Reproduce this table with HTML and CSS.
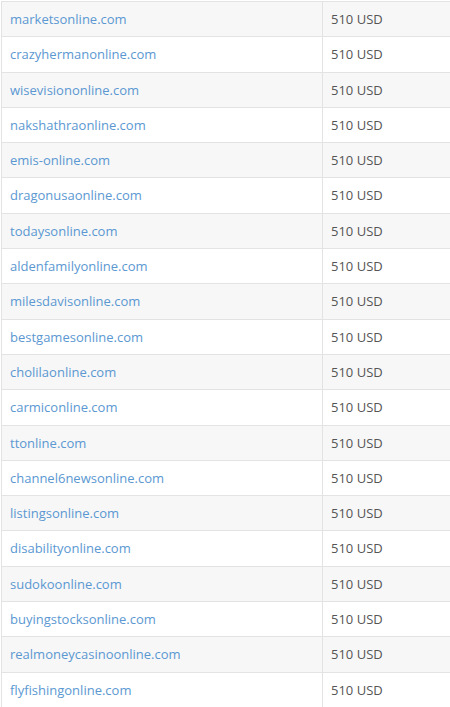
FILE: index.html
```html
<!DOCTYPE html>
<html lang="en">
<head>
    <meta charset="UTF-8">
    <title>Domains</title>
    <link rel="stylesheet" href="styles.css">
</head>
<body>
<div class="wrap">
    <table class="domains">
        <tbody>
            <tr><td><a href="#">marketsonline.com</a></td><td>510 USD</td></tr>
            <tr><td><a href="#">crazyhermanonline.com</a></td><td>510 USD</td></tr>
            <tr><td><a href="#">wisevisiononline.com</a></td><td>510 USD</td></tr>
            <tr><td><a href="#">nakshathraonline.com</a></td><td>510 USD</td></tr>
            <tr><td><a href="#">emis-online.com</a></td><td>510 USD</td></tr>
            <tr><td><a href="#">dragonusaonline.com</a></td><td>510 USD</td></tr>
            <tr><td><a href="#">todaysonline.com</a></td><td>510 USD</td></tr>
            <tr><td><a href="#">aldenfamilyonline.com</a></td><td>510 USD</td></tr>
            <tr><td><a href="#">milesdavisonline.com</a></td><td>510 USD</td></tr>
            <tr><td><a href="#">bestgamesonline.com</a></td><td>510 USD</td></tr>
            <tr><td><a href="#">cholilaonline.com</a></td><td>510 USD</td></tr>
            <tr><td><a href="#">carmiconline.com</a></td><td>510 USD</td></tr>
            <tr><td><a href="#">ttonline.com</a></td><td>510 USD</td></tr>
            <tr><td><a href="#">channel6newsonline.com</a></td><td>510 USD</td></tr>
            <tr><td><a href="#">listingsonline.com</a></td><td>510 USD</td></tr>
            <tr><td><a href="#">disabilityonline.com</a></td><td>510 USD</td></tr>
            <tr><td><a href="#">sudokoonline.com</a></td><td>510 USD</td></tr>
            <tr><td><a href="#">buyingstocksonline.com</a></td><td>510 USD</td></tr>
            <tr><td><a href="#">realmoneycasinoonline.com</a></td><td>510 USD</td></tr>
            <tr><td><a href="#">flyfishingonline.com</a></td><td>510 USD</td></tr>
        </tbody>
    </table>
</div>
</body>
</html>
```

FILE: styles.css
```css
body {
  margin: 0;
  font-family: "Open Sans", sans-serif;
  font-size: 13px;
  color: #555;
  background: #fff;
}
.wrap {
  width: 450px;
  overflow: hidden;
  padding-top: 1px;
}
.domains {
  border-collapse: collapse;
  width: 480px;
  margin-left: 1px;
}
.domains td {
  border: 1px solid #e3e3e3;
  padding: 8px 8px;
  line-height: 18.3px;
  text-align: left;
  vertical-align: top;
}
.domains td:first-child {
  width: 304px;
}
.domains tr:nth-child(odd) {
  background: #f7f7f7;
}
.domains a {
  color: #5b98d2;
  text-decoration: none;
}
```
